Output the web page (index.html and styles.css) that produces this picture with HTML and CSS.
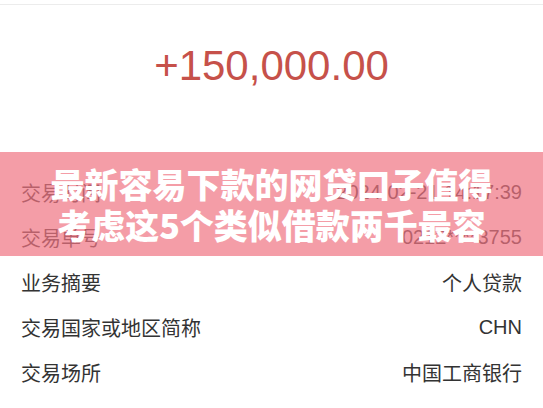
FILE: index.html
```html
<!DOCTYPE html>
<html lang="zh-CN">
<head>
    <meta charset="UTF-8">
    <meta name="viewport" content="width=device-width, initial-scale=1.0">
    <title>交易详情</title>
    <link rel="stylesheet" href="styles.css">
</head>
<body>
    <div class="page">
        <div class="topbar"></div>

        <div class="amount">+150,000.00</div>

        <div class="details">
            <div class="row"><span>交易时间</span><span>2024-02-21 14:17:39</span></div>
            <div class="row"><span>交易单号</span><span>0212****3755</span></div>
            <div class="row"><span>业务摘要</span><span>个人贷款</span></div>
            <div class="row"><span>交易国家或地区简称</span><span>CHN</span></div>
            <div class="row"><span>交易场所</span><span>中国工商银行</span></div>
            <div class="row"><span>交易金额</span><span>150,000.00</span></div>
        </div>

        <!-- title banner over the details -->
        <div class="banner">
            <h1>最新容易下款的网贷口子值得<br>考虑这5个类似借款两千最容</h1>
        </div>
    </div>
</body>
</html>
```

FILE: styles.css
```css
body {
    margin: 0;
    background-color: #fff;
    font-family: 'Liberation Sans', 'Noto Sans CJK SC', sans-serif;
    overflow: hidden;
}

.page {
    position: relative;
    height: 408px;
    overflow: hidden;
}

.topbar {
    height: 4px;
    border-bottom: 1px solid #ececec;
}

.amount {
    padding: 37px 0 81px;
    font-size: 42px;
    line-height: 47px;
    text-align: center;
    color: #c6514a;
}

.details {
    padding: 0 21px;
}

.row {
    display: flex;
    justify-content: space-between;
    align-items: center;
    height: 45px;
    font-size: 20px;
    color: #333;
}

/* Banner */
.banner {
    position: absolute;
    top: 152px;
    left: 0;
    right: 0;
    height: 104px;
    display: flex;
    align-items: center;
    justify-content: center;
    background-color: rgba(240, 116, 129, 0.7);
}

.banner h1 {
    margin: 0;
    font-family: 'Noto Sans CJK SC', sans-serif;
    font-weight: 900;
    font-size: 34px;
    line-height: 41px;
    text-align: center;
    color: #fff;
}
```
